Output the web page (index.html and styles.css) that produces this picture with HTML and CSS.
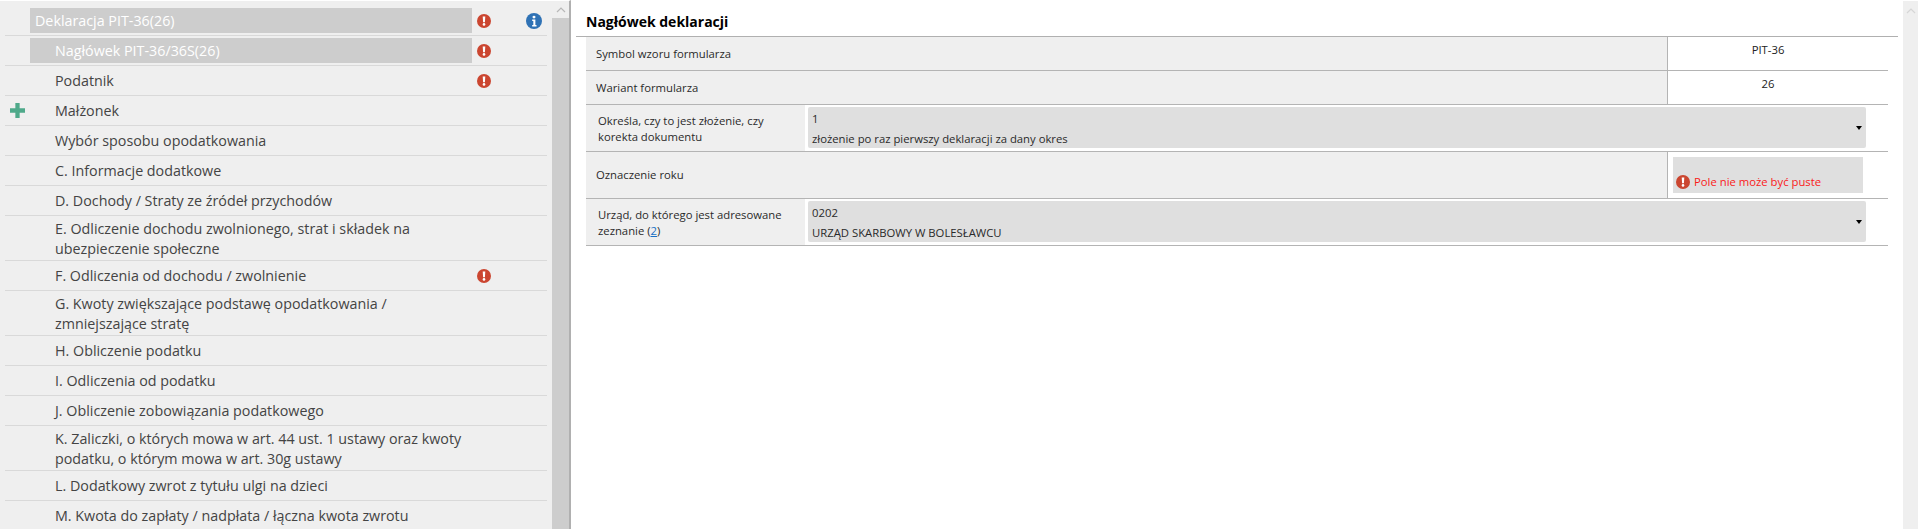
FILE: index.html
```html
<!DOCTYPE html>
<html lang="pl">
<head>
<meta charset="utf-8">
<title>Deklaracja PIT-36</title>
<link rel="stylesheet" href="styles.css">
</head>
<body>
<svg class="defs" width="0" height="0" aria-hidden="true">
  <symbol id="err" viewBox="0 0 14 14"><circle cx="7" cy="7" r="7" fill="#cb4630"/><path d="M5.7 2.6h2.6l-.4 5.6H6.1z" fill="#fff"/><circle cx="7" cy="10.4" r="1.3" fill="#fff"/></symbol>
  <symbol id="info" viewBox="0 0 14 14"><circle cx="7" cy="7" r="7" fill="#2f72b5"/><circle cx="7" cy="3.6" r="1.3" fill="#fff"/><path d="M5.4 5.6h2.8v5h1v1.3H5.4v-1.3h1v-3.7h-1z" fill="#fff"/></symbol>
  <symbol id="plus" viewBox="0 0 14 14"><path d="M5 0h4v5h5v4H9v5H5V9H0V5h5z" fill="#4fa98a"/></symbol>
  <symbol id="up" viewBox="0 0 10 6"><path d="M1 5l4-4 4 4" fill="none" stroke="currentColor" stroke-width="1.2"/></symbol>
</svg>
<div class="app">
  <aside class="side">
    <div class="tree">
      <div class="row"><span class="tog"></span><span class="lbl root active">Deklaracja PIT-36(26)</span><span class="stat"><svg class="ic"><use href="#err"/></svg></span><span class="inf"><svg class="ic-info"><use href="#info"/></svg></span></div>
      <div class="row"><span class="tog"></span><span class="lbl active">Nagłówek PIT-36/36S(26)</span><span class="stat"><svg class="ic"><use href="#err"/></svg></span></div>
      <div class="row"><span class="tog"></span><span class="lbl">Podatnik</span><span class="stat"><svg class="ic"><use href="#err"/></svg></span></div>
      <div class="row"><span class="tog"><svg class="ic-plus"><use href="#plus"/></svg></span><span class="lbl">Małżonek</span></div>
      <div class="row"><span class="tog"></span><span class="lbl">Wybór sposobu opodatkowania</span></div>
      <div class="row"><span class="tog"></span><span class="lbl">C. Informacje dodatkowe</span></div>
      <div class="row"><span class="tog"></span><span class="lbl">D. Dochody / Straty ze źródeł przychodów</span></div>
      <div class="row tall"><span class="tog"></span><span class="lbl">E. Odliczenie dochodu zwolnionego, strat i składek na<br>ubezpieczenie społeczne</span></div>
      <div class="row"><span class="tog"></span><span class="lbl">F. Odliczenia od dochodu / zwolnienie</span><span class="stat"><svg class="ic"><use href="#err"/></svg></span></div>
      <div class="row tall"><span class="tog"></span><span class="lbl">G. Kwoty zwiększające podstawę opodatkowania /<br>zmniejszające stratę</span></div>
      <div class="row"><span class="tog"></span><span class="lbl">H. Obliczenie podatku</span></div>
      <div class="row"><span class="tog"></span><span class="lbl">I. Odliczenia od podatku</span></div>
      <div class="row"><span class="tog"></span><span class="lbl">J. Obliczenie zobowiązania podatkowego</span></div>
      <div class="row tall"><span class="tog"></span><span class="lbl">K. Zaliczki, o których mowa w art. 44 ust. 1 ustawy oraz kwoty<br>podatku, o którym mowa w art. 30g ustawy</span></div>
      <div class="row"><span class="tog"></span><span class="lbl">L. Dodatkowy zwrot z tytułu ulgi na dzieci</span></div>
      <div class="row"><span class="tog"></span><span class="lbl">M. Kwota do zapłaty / nadpłata / łączna kwota zwrotu</span></div>
    </div>
    <div class="sbar">
      <div class="sarrow"><svg class="up"><use href="#up"/></svg></div>
      <div class="thumb"></div>
    </div>
  </aside>
  <main class="content">
    <div class="form">
      <h1 class="title">Nagłówek deklaracji</h1>
      <div class="tbl">
        <div class="tr h1r"><div class="td-l">Symbol wzoru formularza</div><div class="td-v">PIT-36</div></div>
        <div class="tr h1r"><div class="td-l">Wariant formularza</div><div class="td-v">26</div></div>
        <div class="tr h2r">
          <div class="td-s">Określa, czy to jest złożenie, czy<br>korekta dokumentu</div>
          <div class="sel"><div class="seltxt"><div>1</div><div>złożenie po raz pierwszy deklaracji za dany okres</div></div><span class="caret"></span></div>
        </div>
        <div class="tr h2r"><div class="td-l">Oznaczenie roku</div><div class="td-v2"><div class="inp"><svg class="ic"><use href="#err"/></svg><span>Pole nie może być puste</span></div></div></div>
        <div class="tr h2r">
          <div class="td-s">Urząd, do którego jest adresowane<br>zeznanie (<a class="lnk" href="#">2</a>)</div>
          <div class="sel"><div class="seltxt"><div>0202</div><div>URZĄD SKARBOWY W BOLESŁAWCU</div></div><span class="caret"></span></div>
        </div>
      </div>
    </div>
    <div class="sbar2"><div class="sarrow light"><svg class="up"><use href="#up"/></svg></div></div>
  </main>
</div>
</body>
</html>
```
FILE: styles.css
```css
* { box-sizing: border-box; }
html, body { margin: 0; height: 529px; overflow: hidden; background: #fff; }
body { font-family: "Open Sans", "Noto Sans", "Liberation Sans", sans-serif; color: #222; }
.defs { display: block; height: 0; }
.app { display: flex; height: 529px; }

.side { width: 571px; flex: none; display: flex; background: #efefef; border-top: 1px solid #fff; border-right: 2px solid #b0b0b0; overflow: hidden; }
.tree { width: 552px; flex: none; padding: 5px 5px 0 5px; }
.row { display: grid; grid-template-columns: 25px 442px 24px 51px; height: 30px; border-bottom: 1px solid #d9d9d9; align-items: center; font-size: 14.3px; line-height: 20px; color: #444; }
.row.tall { height: 45px; }
.tog { display: flex; justify-content: flex-start; padding-left: 5px; }
.lbl { padding: 1px 0 0 25px; white-space: nowrap; }
.lbl.root { padding-left: 5px; }
.lbl.active { background: #cdcdcd; color: #fff; height: 25px; line-height: 24px; padding-top: 1px; }
.stat { display: flex; justify-content: center; }
.inf { display: flex; justify-content: flex-end; padding-right: 5px; }
.ic { display: block; width: 14px; height: 14px; flex: none; }
.ic-info { display: block; width: 16px; height: 16px; flex: none; }
.ic-plus { display: block; width: 15px; height: 15px; flex: none; }

.sbar { width: 17px; flex: none; display: flex; flex-direction: column; }
.sarrow { height: 17px; display: flex; justify-content: center; align-items: center; color: #b8b8b8; }
.sarrow.light { color: #d6d6d6; height: 20px; }
.up { display: block; width: 10px; height: 6px; }
.thumb { flex: 1; background: #cdcdcd; }

.content { flex: 1; display: flex; min-width: 0; }
.form { flex: 1; padding: 0 5px; min-width: 0; }
.title { margin: 0; height: 37px; border-bottom: 1px solid #b0b0b0; padding: 12px 0 0 10px; font-size: 14px; line-height: 20px; font-weight: 700; color: #000; }
.tbl { margin-left: 10px; width: 1302px; font-size: 11.3px; line-height: 16px; color: #2a2a2a; }
.tr { display: flex; border-bottom: 1px solid #b4b4b4; }
.h1r { height: 34px; }
.h2r { height: 47px; }
.td-l { width: 1082px; flex: none; background: #efefef; border-right: 1px solid #b4b4b4; padding-left: 10px; display: flex; align-items: center; }
.td-v { flex: 1; padding: 0 20px 7px 0; display: flex; align-items: center; justify-content: center; color: #222; }
.td-v2 { flex: 1; padding: 5px 25px 4px 5px; }
.td-s { width: 219px; flex: none; background: #efefef; padding: 8px 0 0 12px; }
.sel { width: 1058px; margin: 2px 0 3px 3px; background: #dfdfdf; border-radius: 2px; display: flex; align-items: center; justify-content: space-between; padding: 0 4px; }
.seltxt { line-height: 20px; padding-top: 2px; }
.caret { width: 0; height: 0; border-left: 3px solid transparent; border-right: 3px solid transparent; border-top: 4px solid #000; }
.inp { height: 36px; width: 190px; background: #dfdfdf; display: flex; align-items: flex-end; gap: 4px; padding: 0 3px 4px; color: #fa1a1a; white-space: nowrap; line-height: 14px; }
.lnk { color: #1a6fc4; }
.sbar2 { width: 15px; flex: none; background: #efefef; margin-top: 1px; }
```
